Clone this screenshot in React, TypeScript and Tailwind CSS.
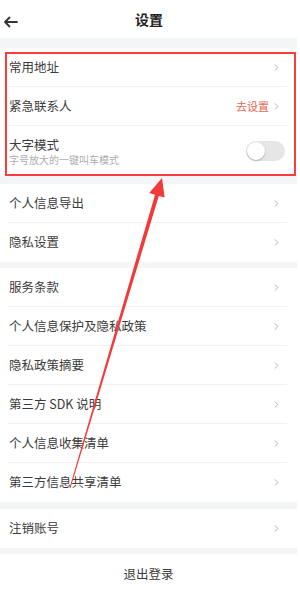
import { ChevronRight } from 'lucide-react';

const font = { fontFamily: '"Noto Sans CJK SC", "Noto Sans", sans-serif' };

function Row({ label, extra, last }: { label: string; extra?: string; last?: boolean }) {
  return (
    <div className="relative flex h-[39px] items-center justify-between pl-[9px] pr-[15px]">
      <span className="text-[12.5px] text-[#3c3c3c]">{label}</span>
      <div className="flex items-center gap-[2px]">
        {extra && <span className="text-[11px] text-[#e8664f]">{extra}</span>}
        <ChevronRight className="h-[11px] w-[11px] text-[#a7adb6]" strokeWidth={2} />
      </div>
      {!last && <div className="absolute bottom-0 left-[8px] right-[10px] h-px bg-[#f1f2f4]" />}
    </div>
  );
}

function Gap({ h }: { h: string }) {
  return <div className={`${h} bg-[#f4f5f7]`} />;
}

export default function App() {
  return (
    <div className="relative min-h-[604px] w-[300px] bg-white" style={font}>
      <div className="w-[297px]">
        {/* header */}
        <div className="relative flex h-[38px] items-center justify-center">
          <svg className="absolute left-[3px] top-[16px]" width="15" height="12" viewBox="0 0 15 12">
            <path d="M14 6H2M6.5 1.5L2 6l4.5 4.5" fill="none" stroke="#333" strokeWidth="1.8" strokeLinecap="round" strokeLinejoin="round" />
          </svg>
          <span className="ml-[1px] text-[14px] font-bold text-[#222]">设置</span>
        </div>
        <Gap h="h-[10px]" />

        {/* section 1 */}
        <div>
          <Row label="常用地址" />
          <Row label="紧急联系人" extra="去设置" />
          <div className="flex h-[50px] items-center justify-between pl-[9px] pr-[12px]">
            <div className="flex flex-col">
              <span className="text-[12.5px] leading-[17px] text-[#3c3c3c]">大字模式</span>
              <span className="text-[10px] leading-[13px] text-[#aeaeae]">字号放大的一键叫车模式</span>
            </div>
            <div className="relative h-[20px] w-[39px] rounded-full bg-[#e6e6e6]">
              <div className="absolute left-[1px] top-[1px] h-[18px] w-[18px] rounded-full bg-white shadow-[0_1px_2px_rgba(0,0,0,0.25)]" />
            </div>
          </div>
        </div>
        <Gap h="h-[8px]" />

        {/* section 2 */}
        <div>
          <Row label="个人信息导出" />
          <Row label="隐私设置" last />
        </div>
        <Gap h="h-[6px]" />

        {/* section 3 */}
        <div>
          <Row label="服务条款" />
          <Row label="个人信息保护及隐私政策" />
          <Row label="隐私政策摘要" />
          <Row label="第三方 SDK 说明" />
          <Row label="个人信息收集清单" />
          <Row label="第三方信息共享清单" last />
        </div>
        <Gap h="h-[7px]" />

        <Row label="注销账号" last />
        <Gap h="h-[6px]" />

        <div className="flex h-[41px] items-center justify-center">
          <span className="text-[12.5px] text-[#3c3c3c]">退出登录</span>
        </div>
      </div>

      {/* annotation: red box */}
      <div className="absolute left-[5px] top-[52px] h-[124px] w-[291px] border-2 border-[#ff3b3b]" />

      {/* annotation: arrow */}
      <svg className="pointer-events-none absolute left-0 top-0" width="300" height="604" viewBox="0 0 300 604">
        <polygon
          points="162,178 164.6,197.5 158.8,195.9 70.5,488.1 69.5,487.9 155,194.7 149.2,193"
          fill="#f33a3a"
        />
      </svg>
    </div>
  );
}
